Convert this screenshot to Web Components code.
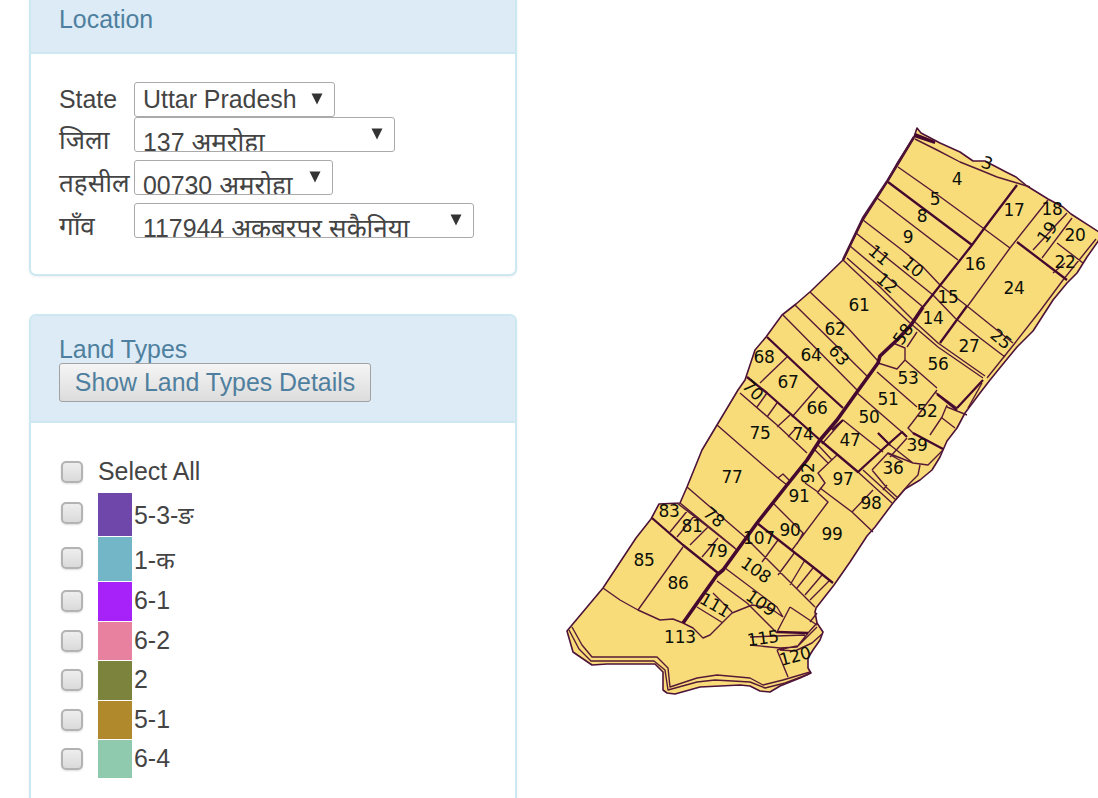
<!DOCTYPE html>
<html lang="en"><head><meta charset="utf-8"><title>Land records</title>
<style>
html,body{margin:0;height:798px;overflow:hidden;background:#fff}
body{font-family:"Liberation Sans","Noto Sans",sans-serif;font-size:24.9px;color:#444}
</style></head><body>
<land-app></land-app>
<script>
const define=(name,html,extra)=>customElements.define(name,class extends HTMLElement{
  connectedCallback(){
    if(this.shadowRoot)return;
    this.attachShadow({mode:'open'}).innerHTML=html;
    if(extra)extra(this,this.shadowRoot);
  }
});

define('info-panel',`<style>
:host{display:block;box-sizing:border-box;width:488px;border:2px solid #cce9f2;border-radius:7px;background:#fff;box-shadow:0 1px 3px #0001;overflow:hidden}
header{box-sizing:border-box;height:var(--head);padding:var(--pad) 28px 0;background:#dcebf6;border-bottom:2px solid #cce9f2;color:#4f7f9e;line-height:28px}
section{padding:var(--body) 28px 0}
</style><header><slot name="title"></slot></header><section><slot></slot></section>`);

define('field-row',`<style>
:host{display:flex;height:35px;align-items:flex-start}
label{flex:none;width:75px;white-space:nowrap;line-height:34px;height:34px;font-size:var(--fs,inherit);padding-top:var(--lt,0)}
</style><label></label><slot></slot>`,(h,r)=>{r.querySelector('label').textContent=h.getAttribute('label')});

define('drop-box',`<style>
:host{display:flex;box-sizing:border-box;height:35px;border:1.5px solid #aaa;border-radius:3px;background:#fff;overflow:hidden;justify-content:space-between;padding:0 11px 0 8px}
span{white-space:nowrap;line-height:32px;padding-top:var(--drop,0)}
svg{flex:none;width:12px;height:12px;margin-top:10px}
</style><span><slot></slot></span><svg viewBox="0 0 12 12"><path d="M0.5 0.5H11.5L6 11.5Z" fill="#333"/></svg>`);

define('push-button',`<style>
:host{display:block;width:312px}
button{display:block;box-sizing:border-box;width:312px;height:39px;margin:0;padding:0 0 2px;font:inherit;color:inherit;white-space:nowrap;border:1.5px solid #a2a2a2;border-radius:3px;background:linear-gradient(#f5f5f5,#dcdcdc)}
</style><button><slot></slot></button>`);

define('check-row',`<style>
:host{display:flex;align-items:flex-start}
i{flex:none;box-sizing:border-box;width:22px;height:22px;margin:var(--c) 15px 0 2px;border:2px solid #b3b3b3;border-radius:5px;background:linear-gradient(#eee,#dadada);box-shadow:0 1px 2px #0002}
b{flex:none;width:34px;height:100%;margin-right:2px}
span{line-height:28px;margin-top:var(--t);white-space:nowrap}
</style><i></i><b></b><span><slot></slot></span>`,(h,r)=>{
  const c=h.getAttribute('color'),b=r.querySelector('b');
  if(c)b.style.background=c;else b.remove();
});

const THIN=`M915 139L937 150 960 162 980 170 997 177 1017 183 1030 187
M898 167L935 193 983 228 1010 248M877 198L958 260M863 220L902 250 923 267 940 285 967 306 1013 343
M856 233L933 295 955 318 980 338 1005 357M850 246L923 307
M843 260L910 323 938 347 983 378M847 258L880 287 915 322 938 343 985 376
M1048 200L1010 248 967 307M1067 213L1033 250M1072 218L1042 258M1057 243L1083 263M1065 263L1053 273
M1096 239L1063 280 1040 311 1015 343 987 378M810 292L847 327 878 361M795 305L868 377M783 315L857 390
M787 357L760 383M818 387L792 417M740 393L777 425 807 453M767 393L757 407M777 403L767 417M790 415L777 427M797 427L788 437
M878 363L897 369 905 360 905 348 893 343M917 332L907 347M905 360L937 388M935 392L957 408M982 383L968 408
M937 390L912 423 908 428 915 435M947 405L942 417 930 435M942 418L955 428M947 407L967 415
M877 372L917 407M857 393L903 433M843 420L883 452M834 424L820 440M843 420L822 444M878 433L890 445 913 463 928 465 943 450
M887 453L903 462M907 438L890 457M872 470L888 453 913 463M872 470L887 488 898 498M883 490L887 485M920 465L918 475 910 483 898 497
M858 472L892 503M863 470L896 500M837 455L818 473 825 483 818 492 805 483M820 488L852 512 873 532M873 490L852 512
M817 492L828 502 792 550M773 503L803 533 797 544M813 448L828 463M818 445L832 460M717 425L778 478 787 485M778 478L783 474 789 480
M687 487L745 537 815 607M680 503L735 548M677 503L708 527 737 550M688 510L670 532M695 515L677 537M708 527L690 545M718 538L702 557
M683 547L638 610M603 588L620 600 638 610 660 620 673 619 683 623 693 628 703 638 710 635 732 613 752 605 770 608 783 617
M713 593L732 612M697 607L723 623M717 581L747 603 777 633M725 568L777 607 783 617
M778 540L762 562M795 552L778 575M805 560L790 585M813 568L797 588M822 575L805 595M830 580L810 600
M790 607L817 625M790 607L777 632M750 637L805 635M750 645L780 648 797 647 808 633 817 623M797 647L817 627
M777 650L788 677M780 650L795 651 812 643 822 634M817 613L810 622M777 650L797 646
M572 627L582 645 592 657 657 657 668 668 670 687 697 678 717 675 750 678 763 685 783 680 810 672
M569 630L579 649 591 661 654 661 665 670 668 690 697 682 715 680 750 682 765 688 785 683 809 674`;
const THICK=`M915 134L935 142M914 136L935 143M888 182L972 245M1017 185L983 230 972 245 923 307M967 306L940 343M1017 242L1067 280
M767 337L820 387 843 408M747 377L767 393 820 440 858 472 885 447 902 432 907 437M957 408L983 380M937 394L957 410M913 433L943 449
M652 518L683 545 718 573M757 523L813 567 833 583M777 632L808 633M843 420L832 430M890 445L878 433`;
const ROAD=`M923 307L911 325 897 340 880 356 878 363 857 392 837 420 820 440 807 460 787 485 757 523 723 570 717 575 683 623`;
const EDGE='M917 128L921 133 940 143 960 152 973 161 985 161 1006 172 1016 177 1027 186 1048 199 1063 207 1071 214 1099 232 1099 240 1087 257 1077 273 1067 283 1053 300 1033 331 1017 347 1003 364 990 380 980 393 965 413 957 428 947 441 943 450 940 457 932 470 920 480 905 489 893 503 875 527 867 536 850 562 834 585 816 608 815 612 817 623 823 632 820 640 813 650 808 658 808 668 811 673 800 678 780 686 770 692 760 691 750 686 740 685 700 687 675 694 667 693 663 690 663 672 655 664 607 664 592 665 573 652 567 631 572 625 603 588 636 538 651 519 659 504 680 503 687 487 702 450 717 425 738 390 745 380 755 350 766 337 782 315 796 304 811 291 843 260 850 246 863 220 877 198 888 180 898 162 914 137Z';
// number, centre x, centre y, rotation in degrees
const PLOTS=[[3,987,163,20],[4,957,179],[5,935,199],[8,922,216],[9,908,237],[17,1014,210],[18,1052,209],[19,1047,232,-55],[20,1075,235],[22,1065,262],[24,1014,288],[16,975,264],[11,879,255,40],[10,913,267,40],[12,887,283,40],[15,948,297],[14,933,318],[61,859,305],[62,835,329],[58,903,334,-55],[25,1001,339,40],[27,969,346],[56,938,364],[53,908,378],[68,764,357],[64,811,355],[63,839,355,50],[67,788,382],[66,817,408],[51,888,399],[50,869,417],[52,927,411],[70,753,390,45],[75,760,433],[74,803,434],[47,850,440],[39,917,445],[36,893,468],[77,732,477],[92,808,473,-90],[97,843,479],[91,799,496],[98,871,503],[83,669,511],[81,692,526],[78,714,517,40],[79,717,551],[107,759,538],[90,790,530],[99,832,534],[85,644,560],[86,678,583],[108,756,570,35],[109,761,603,35],[111,715,605,30],[113,680,637],[115,763,638,-8],[120,795,656,-15]];
define('parcel-map',`<style>:host{display:block;width:558px;height:700px}svg{display:block}
text{font:17px "DejaVu Sans",sans-serif;fill:#0c1008;text-anchor:middle;letter-spacing:-.2px}</style>
<svg width="558" height="700" viewBox="540 0 558 700" fill="none" stroke-linejoin="round">
<path d="${EDGE}" fill="#f9dc7a" stroke="#4c1238" stroke-width="1.6"/>
<path d="${THIN}" stroke="#561a36" stroke-width="1.4"/>
<path d="${THICK}" stroke="#45082f" stroke-width="2.3"/>
<path d="${ROAD}" stroke="#45082f" stroke-width="3.6"/>
<path d="M914 137L888 180 863 218 843 260" stroke="#4c1238" stroke-width="2.6"/>
${PLOTS.map(([n,x,y,a])=>`<text x="${x}" y="${y+6}" transform="rotate(${a||0} ${x} ${y})">${n}</text>`).join('')}
</svg>`);

define('land-app',`<style>
:host{display:grid;grid-template-columns:511px 558px;padding-left:29px;height:798px;overflow:hidden}
.loc{--head:62px;--pad:13px;--body:28px;height:286px;margin-top:-10px}
.types{--head:107px;--pad:19px;--body:28px;height:520px;margin-top:38px}
.hi{font-size:26px;line-height:1px}
field-row.d{--fs:26px}
</style>
<div>
<info-panel class="loc"><span slot="title">Location</span>
<field-row label="State" style="height:35px"><drop-box style="width:201px">Uttar Pradesh</drop-box></field-row>
<field-row class="d" label="जिला" style="height:43px;--lt:6px"><drop-box style="width:261px;--drop:8px">137 <span class="hi">अमरोहा</span></drop-box></field-row>
<field-row class="d" label="तहसील" style="height:43px;--lt:6px"><drop-box style="width:199px;--drop:8px">00730 <span class="hi">अमरोहा</span></drop-box></field-row>
<field-row class="d" label="गाँव" style="--lt:6px"><drop-box style="width:340px;--drop:8px">117944 <span class="hi">अकबरपुर सकैनिया</span></drop-box></field-row>
</info-panel>
<info-panel class="types"><div slot="title">Land Types<push-button>Show Land Types Details</push-button></div>
<check-row style="height:42px;--c:10px;--t:6px">Select All</check-row>
<check-row color="#6f46a9" style="height:43px;margin-bottom:1px;--c:9px;--t:8px">5-3-<span class="hi" style="font-size:24px">ङ</span></check-row>
<check-row color="#73b6c7" style="height:44px;margin-bottom:1px;--c:10px;--t:9px">1-<span class="hi" style="font-size:24px">क</span></check-row>
<check-row color="#a722f8" style="height:38.5px;margin-bottom:1px;--c:8px;--t:4px">6-1</check-row>
<check-row color="#e8809f" style="height:38.5px;margin-bottom:1px;--c:8px;--t:4px">6-2</check-row>
<check-row color="#7b833c" style="height:38.5px;margin-bottom:1px;--c:8px;--t:4px">2</check-row>
<check-row color="#b1892d" style="height:38.5px;margin-bottom:1px;--c:8px;--t:4px">5-1</check-row>
<check-row color="#8fcaae" style="height:38px;--c:8px;--t:4px">6-4</check-row>
</info-panel>
</div>
<parcel-map></parcel-map>`);
</script></body></html>
